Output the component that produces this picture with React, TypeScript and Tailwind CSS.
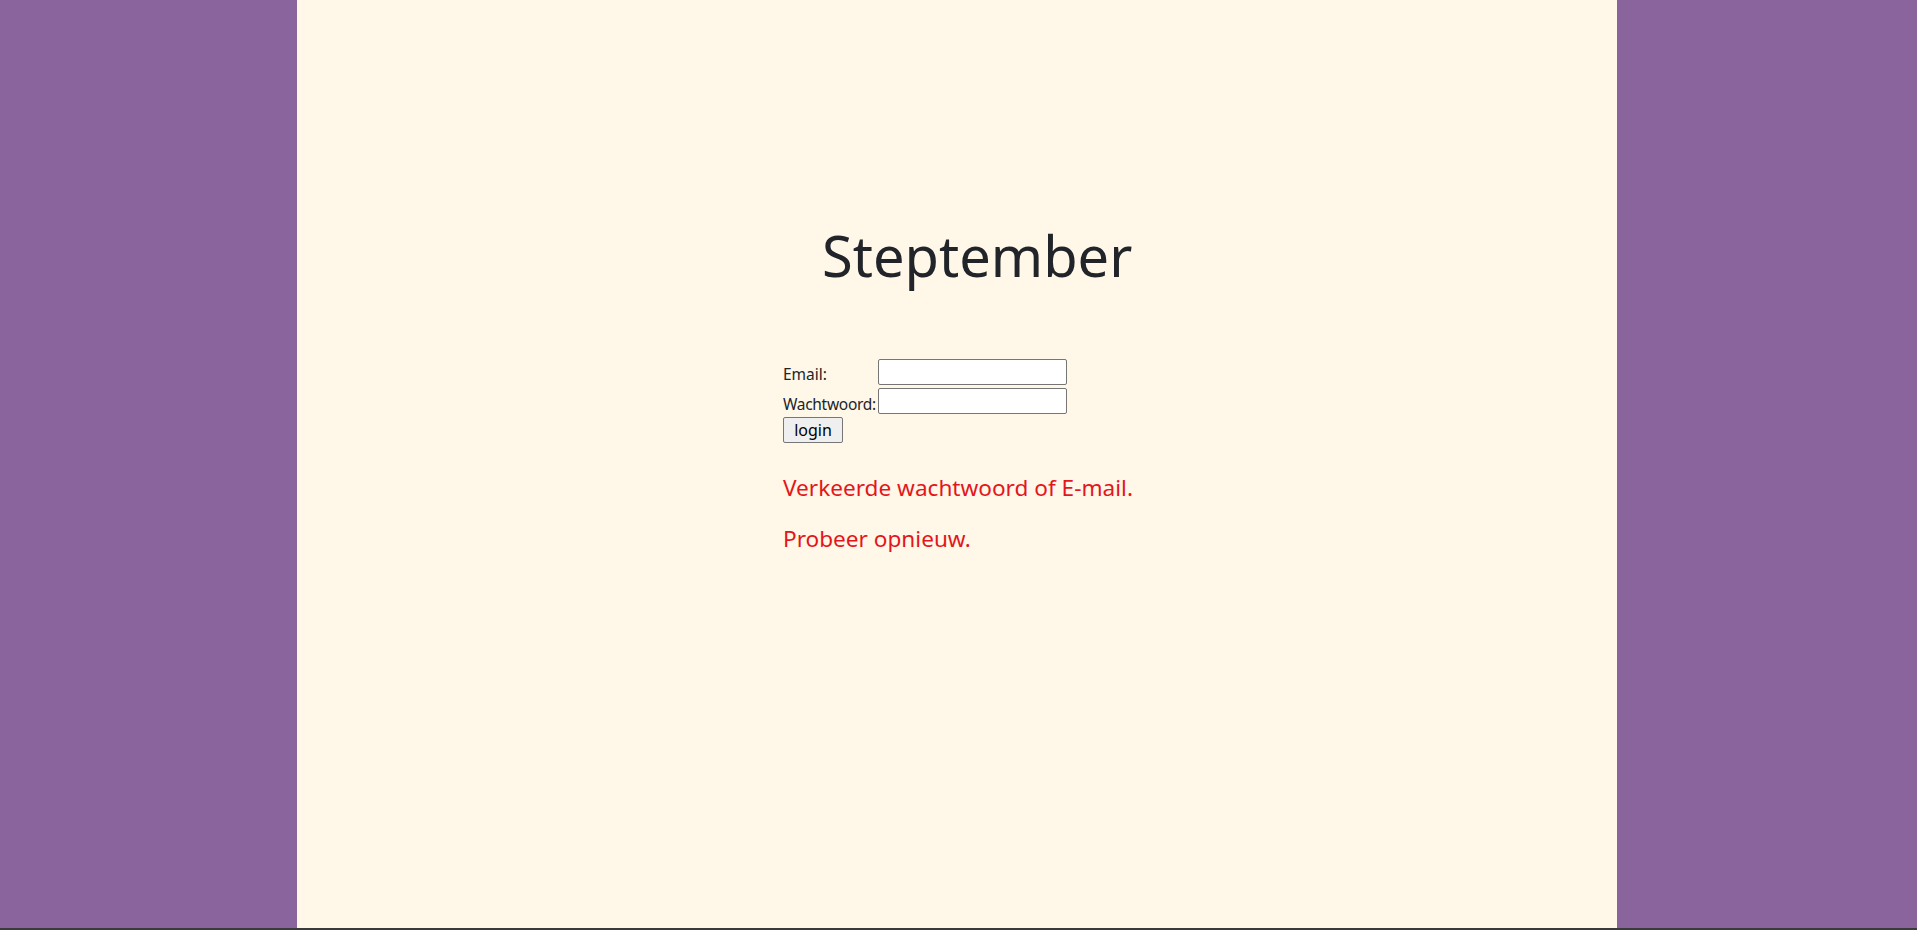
import React from "react";

export default function App() {
  const font = { fontFamily: '"Noto Sans", "Open Sans", sans-serif' };
  return (
    <div className="w-full h-[930px] flex flex-col bg-[#3b3b3b]" style={font}>
      <div className="h-[928px] w-full bg-[#8a649d] flex">
        <div className="ml-[297px] w-[1320px] h-full bg-[#fff7e8] flex flex-col">
          <h1 className="mt-[220px] ml-[525px] text-[56px] leading-[70px] text-[#212529] font-normal">
            Steptember
          </h1>
          <div className="mt-[68px] ml-[486px] flex flex-col">
            <div className="flex items-start h-[29px]">
              <label className="w-[95px] mt-[6px] text-[15.5px] text-[#212529] leading-[20px]">Email:</label>
              <input type="text" className="mt-[1px] w-[189px] h-[26px] bg-white border border-[#767676] rounded-[2px]" />
            </div>
            <div className="flex items-start h-[29px]">
              <label className="w-[95px] mt-[7px] text-[15.5px] text-[#212529] leading-[20px] tracking-[-0.3px] whitespace-nowrap">Wachtwoord:</label>
              <input type="password" className="mt-[1px] w-[189px] h-[26px] bg-white border border-[#767676] rounded-[2px]" />
            </div>
            <div className="mt-[1px]">
              <button className="w-[60px] h-[26px] bg-[#efefef] border border-[#767676] rounded-[2px] text-[16px] leading-[20px] text-black">
                login
              </button>
            </div>
            <p className="mt-[30px] text-[22.6px] leading-[30px] text-[#e3161b]">Verkeerde wachtwoord of E-mail.</p>
            <p className="mt-[21px] text-[22.6px] leading-[30px] text-[#e3161b]">Probeer opnieuw.</p>
          </div>
        </div>
      </div>
    </div>
  );
}
